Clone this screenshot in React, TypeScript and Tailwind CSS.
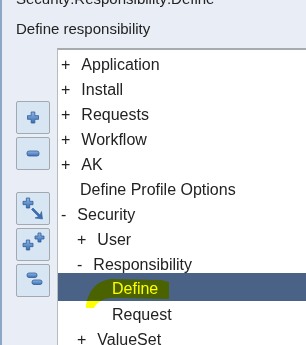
import React from "react";

type Node = { label: string; marker?: "+" | "-"; level: number; selected?: boolean };

const nodes: Node[] = [
  { label: "Application", marker: "+", level: 0 },
  { label: "Install", marker: "+", level: 0 },
  { label: "Requests", marker: "+", level: 0 },
  { label: "Workflow", marker: "+", level: 0 },
  { label: "AK", marker: "+", level: 0 },
  { label: "Define Profile Options", level: 0 },
  { label: "Security", marker: "-", level: 0 },
  { label: "User", marker: "+", level: 1 },
  { label: "Responsibility", marker: "-", level: 1 },
  { label: "Define", level: 2, selected: true },
  { label: "Request", level: 2 },
  { label: "ValueSet", marker: "+", level: 1 },
];

const indent = ["pl-[3px]", "pl-[19px]", "pl-[35px]"];

function Plus({ x, y, s = 11 }: { x: number; y: number; s?: number }) {
  const t = s / 3;
  const d = `M${x + t} ${y}h${t}v${t}h${t}v${t}h${-t}v${t}h${-t}v${-t}h${-t}v${-t}h${t}z`;
  return <path d={d} fill="url(#blu)" stroke="#2f5d99" strokeWidth="0.8" strokeLinejoin="round" />;
}

function Bar({ x, y, w = 12, h = 5 }: { x: number; y: number; w?: number; h?: number }) {
  return <rect x={x} y={y} width={w} height={h} rx={2} fill="url(#blu)" stroke="#2f5d99" strokeWidth="0.8" />;
}

function Icon({ kind }: { kind: string }) {
  return (
    <svg width="32" height="31" viewBox="0 0 32 31">
      <defs>
        <linearGradient id="blu" x1="0" y1="0" x2="0" y2="1">
          <stop offset="0" stopColor="#8fb6e6" />
          <stop offset="1" stopColor="#3c6fb2" />
        </linearGradient>
      </defs>
      {kind === "plus" && <Plus x={10.5} y={10} />}
      {kind === "minus" && <Bar x={10} y={13} />}
      {kind === "expand" && (
        <g>
          <Plus x={6} y={5} s={10} />
          <path d="M16 15 L23 22 L24.5 18.5 L25.5 26 L18 25 L21.5 23.5 L14.5 16.5 Z" fill="#3c6fb2" stroke="#2f5d99" strokeWidth="0.6" strokeLinejoin="round" />
        </g>
      )}
      {kind === "plusplus" && (
        <g>
          <Plus x={18} y={4} s={9} />
          <Plus x={6} y={11} s={10} />
        </g>
      )}
      {kind === "minusminus" && (
        <g>
          <Bar x={10} y={8} w={10} h={4.5} />
          <Bar x={15} y={15} w={10} h={4.5} />
        </g>
      )}
    </svg>
  );
}

function ToolButton({ kind }: { kind: string }) {
  return (
    <button className="flex h-[33px] w-[34px] items-center justify-center rounded-[2px] border border-[#a3a9b0] bg-[#d8e5f2]">
      <Icon kind={kind} />
    </button>
  );
}

export default function App() {
  return (
    <div
      className="h-[345px] w-[306px] overflow-hidden border-l-2 border-[#8ea7c9] bg-[#e9eef6] text-[#222]"
      style={{ fontFamily: '"Liberation Sans", Arial, sans-serif' }}
    >
      <div className="-mt-[16px] pl-[14px] text-[15px] leading-[30px]">
        <div>Security:Responsibility:Define</div>
        <div>Define responsibility</div>
      </div>

      <div className="mt-[4px] flex">
        <div className="flex w-[55px] flex-col pl-[14px] pt-[53px]">
          <div className="flex flex-col gap-[3px]">
            <ToolButton kind="plus" />
            <ToolButton kind="minus" />
          </div>
          <div className="mt-[22px] flex flex-col gap-[3px]">
            <ToolButton kind="expand" />
            <ToolButton kind="plusplus" />
            <ToolButton kind="minusminus" />
          </div>
        </div>

        <div className="relative h-[300px] flex-1 border-l border-t-2 border-l-[#b8bcc2] border-t-[#a7abb0] bg-white pt-[2px] text-[16px]">
          {nodes.map((n) =>
            n.selected ? (
              <div key={n.label} className="-mt-[4px] mb-[1px] flex h-[28px] items-center bg-[#4a6286] pt-[4px] text-white">
                <div className={`flex items-center ${indent[n.level]}`}>
                  <span className="w-[19px]" />
                  <span>{n.label}</span>
                </div>
              </div>
            ) : (
              <div key={n.label} className={`flex h-[25px] items-center ${indent[n.level]}`}>
                {n.marker === "+" && <span className="mr-[11px]">+</span>}
                {n.marker === "-" && <span className="mr-[11px]">-</span>}
                {!n.marker && <span className="w-[19px]" />}
                <span>{n.label}</span>
              </div>
            )
          )}
          <svg className="pointer-events-none absolute left-0 top-0 mix-blend-multiply" width="249" height="300" viewBox="57 48 249 300">
            <path
              d="M85 306 C86 291 94 279 110 277 L160 278 L168 280 L168 297 L120 296 C106 295 97 298 93 306 Z"
              fill="#ffff00"
            />
          </svg>
        </div>
      </div>
    </div>
  );
}
